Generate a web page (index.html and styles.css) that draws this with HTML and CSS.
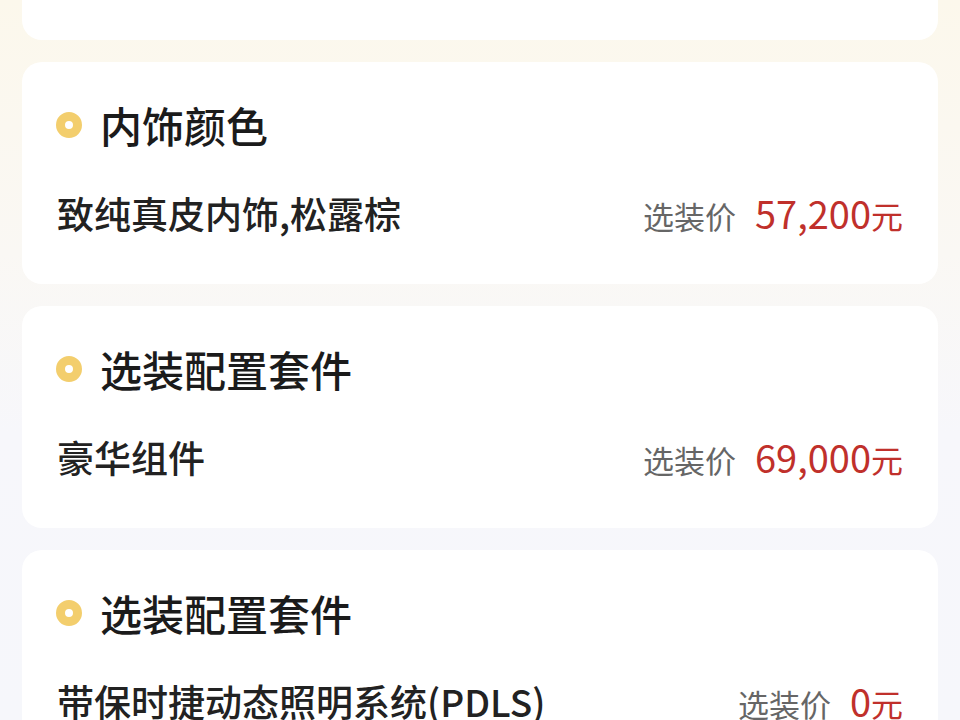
FILE: index.html
```html
<!DOCTYPE html>
<html lang="zh-CN">
<head>
    <meta charset="UTF-8">
    <meta name="viewport" content="width=device-width, initial-scale=1.0">
    <title>选装配置</title>
    <link rel="stylesheet" href="styles.css">
</head>
<body>

<div class="list">
    <!-- 上一张卡片，只露出底部 -->
    <div class="card card-cut"></div>

    <div class="card">
        <div class="card-title"><span class="dot"></span>内饰颜色</div>
        <div class="card-row">
            <span class="item-name">致纯真皮内饰,松露棕</span>
            <span class="price"><span class="price-label">选装价</span><span class="price-num">57,200</span><span class="price-unit">元</span></span>
        </div>
    </div>

    <div class="card">
        <div class="card-title"><span class="dot"></span>选装配置套件</div>
        <div class="card-row">
            <span class="item-name">豪华组件</span>
            <span class="price"><span class="price-label">选装价</span><span class="price-num">69,000</span><span class="price-unit">元</span></span>
        </div>
    </div>

    <div class="card">
        <div class="card-title"><span class="dot"></span>选装配置套件</div>
        <div class="card-row">
            <span class="item-name">带保时捷动态照明系统(PDLS)</span>
            <span class="price"><span class="price-label">选装价</span><span class="price-num">0</span><span class="price-unit">元</span></span>
        </div>
    </div>
</div>

</body>
</html>
```

FILE: styles.css
```css
/* General styles */
body {
    font-family: "Noto Sans CJK SC", "Noto Sans", sans-serif;
    background: linear-gradient(180deg, #fcf8ec 0%, #faf8f4 35%, #f7f7fb 60%, #f6f7fb 100%);
    margin: 0;
    padding: 0;
    height: 720px;
    overflow: hidden;
}

.list {
    display: flex;
    flex-direction: column;
    gap: 22px;
    padding: 0 22px;
}

/* Cards */
.card {
    background-color: #fff;
    border-radius: 20px;
    height: 222px;
    box-sizing: border-box;
    padding: 35px 35px 0 34px;
}

.card-cut {
    height: 40px;
    padding: 0;
    border-radius: 0 0 20px 20px;
}

.card-title {
    display: flex;
    align-items: center;
    gap: 18px;
    font-size: 42px;
    font-weight: 500;
    line-height: 56px;
    color: #1b1b1b;
}

.dot {
    width: 26px;
    height: 26px;
    box-sizing: border-box;
    border: 9px solid #f3ce6d;
    border-radius: 50%;
    background-color: #fff;
    flex-shrink: 0;
}

.card-row {
    display: flex;
    justify-content: space-between;
    align-items: baseline;
    margin-top: 35px;
    line-height: 50px;
    padding-left: 1px;
}

.item-name {
    font-size: 37px;
    font-weight: 500;
    color: #222;
}

.price-label {
    font-size: 31px;
    color: #666;
    margin-right: 19px;
}

.price-num {
    font-size: 38px;
    color: #c0302b;
}

.price-unit {
    font-size: 32px;
    color: #c0302b;
}
```
